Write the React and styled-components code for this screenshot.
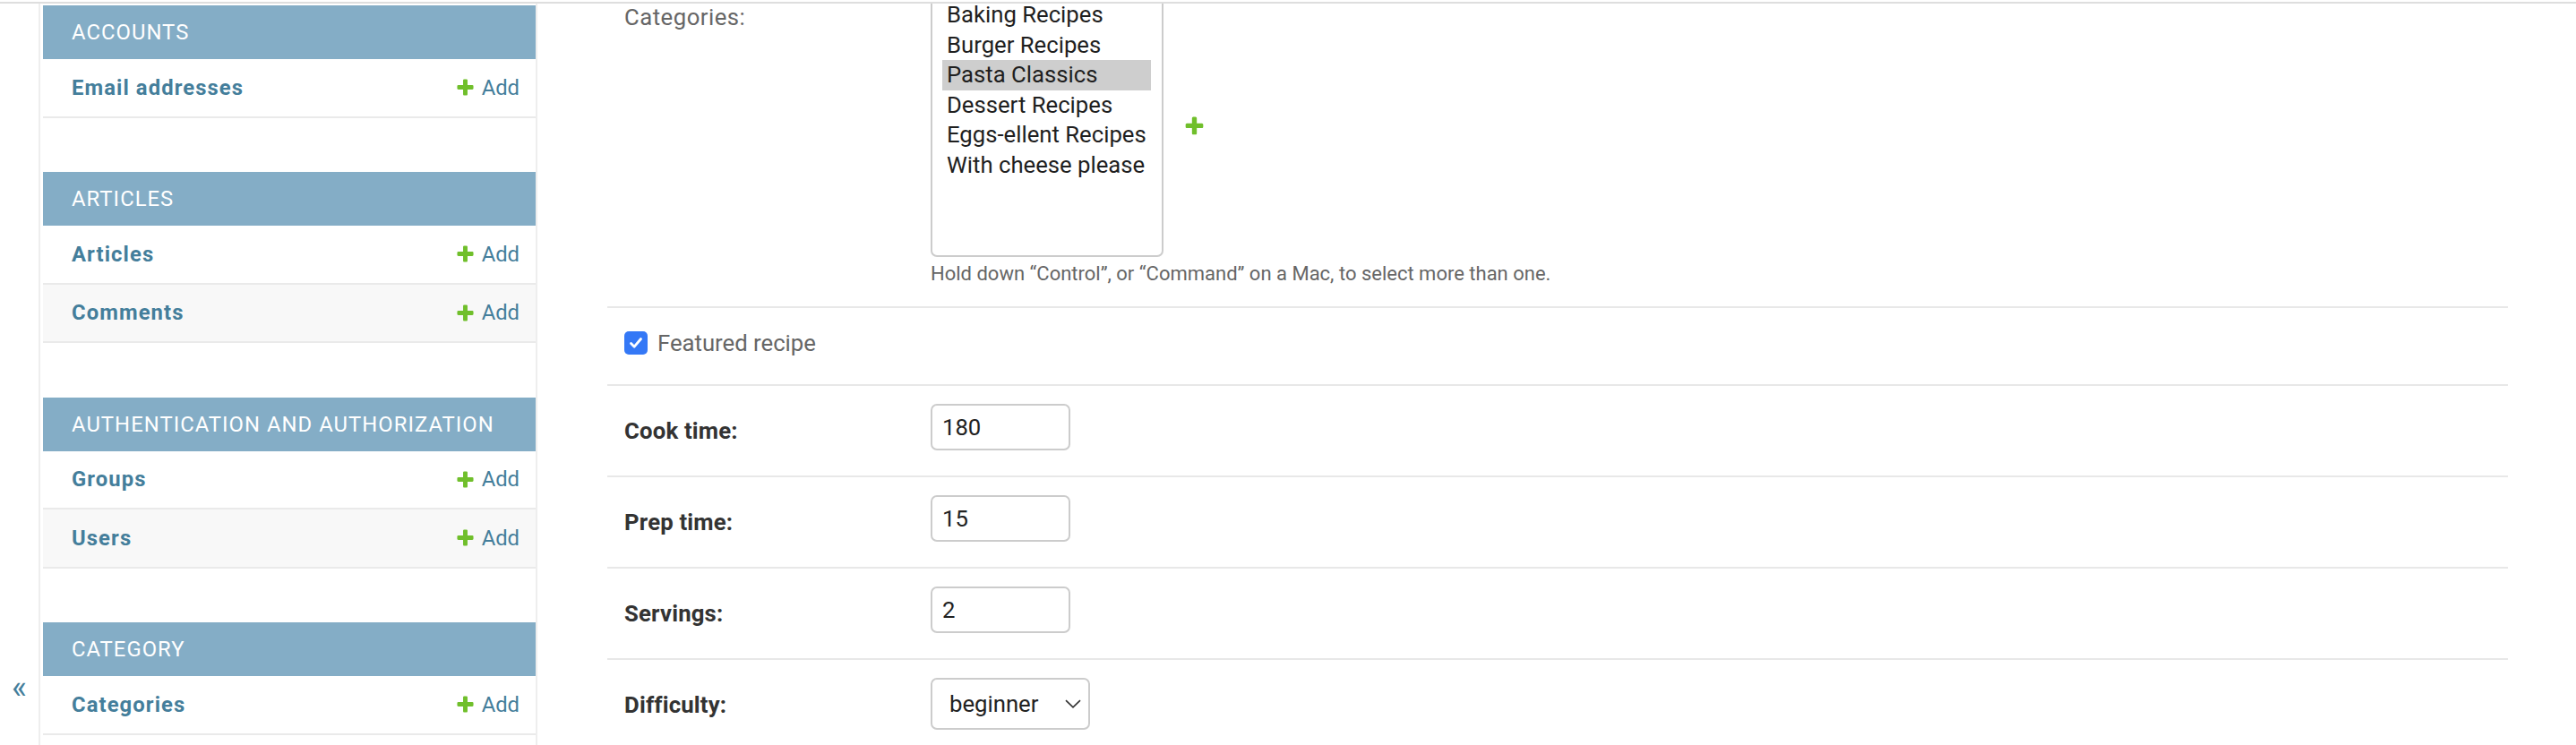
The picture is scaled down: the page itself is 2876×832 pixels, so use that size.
import React from "react";
import styled, { createGlobalStyle } from "styled-components";

const Global = createGlobalStyle`
  html, body { margin: 0; padding: 0; background: #fff; }
  body { font-family: Roboto, "Liberation Sans", Arial, sans-serif; }
  * { box-sizing: border-box; }
`;

const Page = styled.div`
  width: 2876px;
  height: 832px;
  display: flex;
  flex-direction: column;
  overflow: hidden;
  background: #fff;
`;

const TopEdge = styled.div`
  height: 4px;
  flex: none;
  border-bottom: 2px solid #dedede;
`;

const Body = styled.div`
  flex: 1;
  min-height: 0;
  display: flex;
  overflow: hidden;
`;

const ToggleCol = styled.button`
  width: 45px;
  flex: none;
  border: 0;
  border-right: 2px solid #eeeeee;
  background: #fff;
  display: flex;
  flex-direction: column;
  justify-content: flex-end;
  align-items: center;
  padding: 0 0 43px 0;
  color: #447e9b;
  font-family: Roboto, sans-serif;
  font-size: 36px;
  line-height: normal;
  cursor: pointer;
`;

const Sidebar = styled.nav`
  width: 555px;
  flex: none;
  padding: 2px 0 0 3px;
  border-right: 2px solid #eeeeee;
`;

const Module = styled.div`
  margin-bottom: 60.5px;
`;

const Caption = styled.div`
  height: 60px;
  background: #84adc6;
  color: #fff;
  font-size: 23.8px;
  letter-spacing: 1.05px;
  text-transform: uppercase;
  display: flex;
  align-items: center;
  padding-left: 32px;
`;

const ModelRow = styled.div`
  height: 65.5px;
  border-bottom: 2px solid #eaeaea;
  background: ${(p) => (p.$alt ? "#f8f8f8" : "#fff")};
  display: flex;
  align-items: center;
  justify-content: space-between;
  padding: 0 18px 0 32px;
`;

const ModelLink = styled.a`
  color: #447e9b;
  font-weight: 700;
  font-size: 23.8px;
  letter-spacing: 1.1px;
  text-decoration: none;
`;

const AddLink = styled.a`
  display: flex;
  align-items: center;
  gap: 7px;
  color: #447e9b;
  font-size: 23.8px;
  text-decoration: none;
`;

const Main = styled.main`
  flex: 1;
  min-width: 0;
  padding: 0 76px 0 78px;
`;

const Form = styled.div`
  margin-top: -31px;
`;

const FormRow = styled.div`
  display: flex;
  align-items: flex-start;
  padding: 20px 19px ${(p) => p.$pb || 28}px;
  border-bottom: 2px solid #e8e8e8;
`;

const FieldLabel = styled.label`
  width: 342px;
  flex: none;
  line-height: 1;
  font-size: 25.7px;
  padding-top: ${(p) => p.$pt || 18}px;
  color: ${(p) => (p.$bold ? "#333" : "#666")};
  font-weight: ${(p) => (p.$bold ? 700 : 400)};
  letter-spacing: ${(p) => (p.$bold ? 0.2 : 0.5)}px;
`;

const FieldBox = styled.div`
  display: flex;
  flex-direction: column;
`;

const RelatedWrapper = styled.div`
  display: flex;
  align-items: center;
  gap: 22px;
`;

const MultiSelect = styled.div`
  width: 260px;
  height: 294px;
  border: 2px solid #cccccc;
  border-radius: 7px;
  padding: 5px 12px 5px 11px;
  overflow: hidden;
  background: #fff;
`;

const Option = styled.div`
  height: 33.5px;
  line-height: 33.5px;
  padding-left: 5px;
  font-size: 25.7px;
  color: #1f1f1f;
  white-space: nowrap;
  background: ${(p) => (p.$selected ? "#cecece" : "transparent")};
`;

const Help = styled.div`
  margin-top: 6px;
  font-size: 22px;
  line-height: 26px;
  color: #666;
`;

const CheckLine = styled.div`
  height: 37px;
  display: flex;
  align-items: center;
  gap: 11px;
`;

const CheckBox = styled.span`
  width: 26px;
  height: 26px;
  border-radius: 5px;
  background: #3478f6;
  display: flex;
  align-items: center;
  justify-content: center;
`;

const CheckLabel = styled.label`
  font-size: 25.7px;
  color: #666;
`;

const TextInput = styled.input`
  width: 156px;
  height: 52px;
  border: 2px solid #cccccc;
  border-radius: 7px;
  padding: 0 11px;
  font-family: Roboto, sans-serif;
  font-size: 25.7px;
  color: #222;
  background: #fff;
  outline: none;
`;

const SelectBox = styled.div`
  width: 178px;
  height: 58px;
  border: 2px solid #cccccc;
  border-radius: 7px;
  padding: 0 8px 0 19px;
  display: flex;
  align-items: center;
  justify-content: space-between;
  font-size: 25.7px;
  color: #222;
  background: #fff;
`;

const PLUS =
  "M1600 796v192q0 40-28 68t-68 28h-416v416q0 40-28 68t-68 28h-192q-40 0-68-28t-28-68v-416h-416q-40 0-68-28t-28-68v-192q0-40 28-68t68-28h416v-416q0-40 28-68t68-28h192q40 0 68 28t28 68v416h416q40 0 68 28t28 68z";

const Plus = ({ size = 23 }) => (
  <svg width={size} height={size} viewBox="0 0 1792 1792">
    <path fill="#70bf2b" d={PLUS} />
  </svg>
);

const modules = [
  { title: "Accounts", models: ["Email addresses"] },
  { title: "Articles", models: ["Articles", "Comments"] },
  { title: "Authentication and Authorization", models: ["Groups", "Users"] },
  { title: "Category", models: ["Categories"] },
];

const categories = [
  "Baking Recipes",
  "Burger Recipes",
  "Pasta Classics",
  "Dessert Recipes",
  "Eggs-ellent Recipes",
  "With cheese please",
];

export default function App() {
  return (
    <Page>
      <Global />
      <TopEdge />
      <Body>
        <ToggleCol aria-label="Toggle navigation">«</ToggleCol>
        <Sidebar>
          {modules.map((m) => (
            <Module key={m.title}>
              <Caption>{m.title}</Caption>
              {m.models.map((name, i) => (
                <ModelRow key={name} $alt={i % 2 === 1}>
                  <ModelLink href="#">{name}</ModelLink>
                  <AddLink href="#">
                    <Plus />
                    Add
                  </AddLink>
                </ModelRow>
              ))}
            </Module>
          ))}
        </Sidebar>
        <Main>
          <Form>
            <FormRow $pb={23}>
              <FieldLabel $pt={14}>Categories:</FieldLabel>
              <FieldBox>
                <RelatedWrapper>
                  <MultiSelect>
                    {categories.map((c) => (
                      <Option key={c} $selected={c === "Pasta Classics"}>
                        {c}
                      </Option>
                    ))}
                  </MultiSelect>
                  <Plus size={25} />
                </RelatedWrapper>
                <Help>
                  Hold down “Control”, or “Command” on a Mac, to select more than one.
                </Help>
              </FieldBox>
            </FormRow>
            <FormRow>
              <CheckLine>
                <CheckBox>
                  <svg width="18" height="18" viewBox="0 0 18 18">
                    <path
                      d="M3.5 9.5 L7.2 13.2 L14.5 4.5"
                      fill="none"
                      stroke="#fff"
                      strokeWidth="2.8"
                      strokeLinecap="round"
                      strokeLinejoin="round"
                    />
                  </svg>
                </CheckBox>
                <CheckLabel>Featured recipe</CheckLabel>
              </CheckLine>
            </FormRow>
            <FormRow>
              <FieldLabel $bold>Cook time:</FieldLabel>
              <TextInput defaultValue="180" />
            </FormRow>
            <FormRow>
              <FieldLabel $bold>Prep time:</FieldLabel>
              <TextInput defaultValue="15" />
            </FormRow>
            <FormRow>
              <FieldLabel $bold>Servings:</FieldLabel>
              <TextInput defaultValue="2" />
            </FormRow>
            <FormRow>
              <FieldLabel $bold>Difficulty:</FieldLabel>
              <SelectBox>
                beginner
                <svg width="18" height="10" viewBox="0 0 18 10">
                  <path
                    d="M1 1.2 L9 8.8 L17 1.2"
                    fill="none"
                    stroke="#333"
                    strokeWidth="1.6"
                  />
                </svg>
              </SelectBox>
            </FormRow>
          </Form>
        </Main>
      </Body>
    </Page>
  );
}
